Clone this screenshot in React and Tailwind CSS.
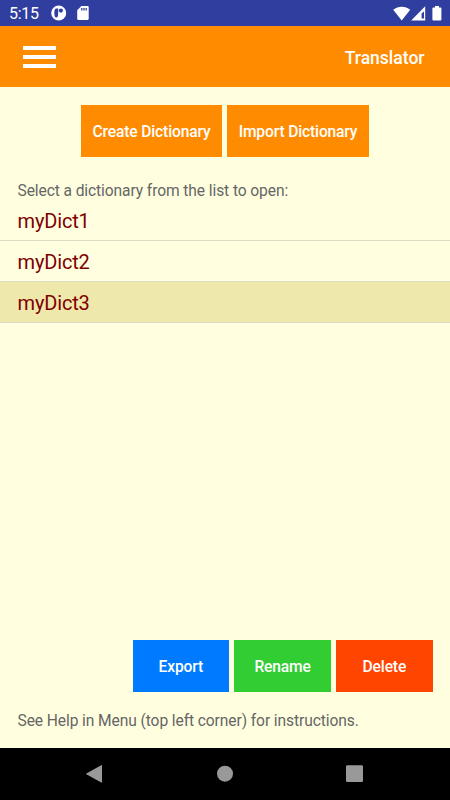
import clsx from "clsx";

const dictionaries = ["myDict1", "myDict2", "myDict3"];
const selected = "myDict3";

const actions = [
  { label: "Export", color: "bg-[#007bff]" },
  { label: "Rename", color: "bg-[#32cd32]" },
  { label: "Delete", color: "bg-[#ff4500]" },
];

function StatusBar() {
  return (
    <div className="h-[26px] shrink-0 bg-[#303f9f] flex items-center text-white">
      <span className="ml-[9px] w-[41px] text-[16px] leading-[26px] tracking-[-0.3px] pt-[2px]">
        5:15
      </span>
      <svg className="w-4 h-4" viewBox="0 0 16 16">
        <circle cx="8.7" cy="8" r="7.5" fill="#fff" />
        <path
          d="M6.4 3.4C5 3.4 4.3 4.8 4.3 7.8s.7 4.8 2 4.8S8.2 11 8.2 8V3.4z"
          fill="#303f9f"
        />
        <circle cx="10.9" cy="5.6" r="2.1" fill="#303f9f" />
      </svg>
      <svg className="ml-[11px] w-[12px] h-[14px]" viewBox="0 0 12 14">
        <path
          d="M4.4 0H10.6Q11.7 0 11.7 1.1V12.8Q11.7 13.9 10.6 13.9H1.3Q.2 13.9 .2 12.8V4.3z"
          fill="#fff"
        />
        <path d="M4.8 2v2.4M7 2v2.4M9.2 2v2.4" stroke="#303f9f" strokeWidth="1.3" />
      </svg>
      <div className="ml-auto mr-[8px] flex items-center">
        <svg className="w-[18px] h-[15px]" viewBox="0 0 18 15">
          <path d="M.2 3.7C5.3-.4 12.3-.4 17.2 3.7L8.7 14.6z" fill="#fff" />
        </svg>
        <svg className="w-[15px] h-[15px]" viewBox="0 0 15 15">
          <path d="M14.2.3V14.4H.2z" fill="#fff" />
          <path d="M13 5.4V12.6H10.6V7.6z" fill="#303f9f" />
        </svg>
        <svg className="ml-[6px] w-[10px] h-[15px]" viewBox="0 0 10 15">
          <path
            d="M3 0h4v1.6h1.4q1 0 1 1v11q0 1-1 1H1.4q-1 0-1-1v-11q0-1 1-1H3z"
            fill="#fff"
          />
        </svg>
      </div>
    </div>
  );
}

function Header() {
  return (
    <header className="h-[61px] shrink-0 bg-[#ff8c00] flex items-center justify-between pl-[23px] pr-[25.5px]">
      <button className="flex flex-col gap-[5px]" aria-label="Menu">
        <span className="w-[33px] h-1 bg-white" />
        <span className="w-[33px] h-1 bg-white" />
        <span className="w-[33px] h-1 bg-white" />
      </button>
      <h1 className="text-[17.5px] font-medium text-white pt-[3px]">Translator</h1>
    </header>
  );
}

function Button({ className, children }) {
  return (
    <button
      className={clsx(
        "flex items-center justify-center text-[15.6px] tracking-[-0.15px] font-medium text-white whitespace-nowrap pt-[3px]",
        className,
      )}
    >
      {children}
    </button>
  );
}

function NavBar() {
  return (
    <nav className="h-[52px] shrink-0 bg-black">
      <svg className="w-full h-full" viewBox="0 0 450 52" fill="#999">
        <path d="M101.2 17.2Q102 16.8 102 17.7V34Q102 34.9 101.2 34.5L86.4 26.2Q85.7 25.8 86.4 25.4z" />
        <circle cx="225" cy="25.7" r="8" />
        <rect x="346" y="17.2" width="17" height="16.8" rx="1.2" />
      </svg>
    </nav>
  );
}

export default function App() {
  return (
    <div className="w-[450px] h-[800px] flex flex-col overflow-hidden bg-[#ffffe0] font-[Roboto,sans-serif]">
      <StatusBar />
      <Header />

      <main className="flex-1 flex flex-col">
        <div className="flex justify-center gap-[5px] pt-[18px]">
          <Button className="w-[141px] h-[52px] bg-[#ff8c00]">Create Dictionary</Button>
          <Button className="w-[142px] h-[52px] bg-[#ff8c00]">Import Dictionary</Button>
        </div>

        <p className="mt-6 mb-[-1px] pl-[17.5px] text-[15.6px] tracking-[-0.1px] leading-5 text-[#666]">
          Select a dictionary from the list to open:
        </p>

        <ul>
          {dictionaries.map((name) => (
            <li
              key={name}
              className={clsx(
                "h-[41px] pl-[17.5px] pt-px flex items-center border-b border-[#dcdcc4] text-[20px] tracking-[-0.15px] text-[#800000]",
                name === selected && "bg-[#eee8aa]",
              )}
            >
              {name}
            </li>
          ))}
        </ul>

        <div className="mt-auto flex justify-end gap-[5.5px] pr-[17.5px]">
          {actions.map(({ label, color }) => (
            <Button key={label} className={clsx("w-[96.3px] h-[52px]", color)}>
              {label}
            </Button>
          ))}
        </div>

        <p className="mt-[19px] mb-[17px] pl-[17.5px] text-[15.6px] tracking-[-0.1px] leading-5 text-[#666]">
          See Help in Menu (top left corner) for instructions.
        </p>
      </main>

      <NavBar />
    </div>
  );
}
